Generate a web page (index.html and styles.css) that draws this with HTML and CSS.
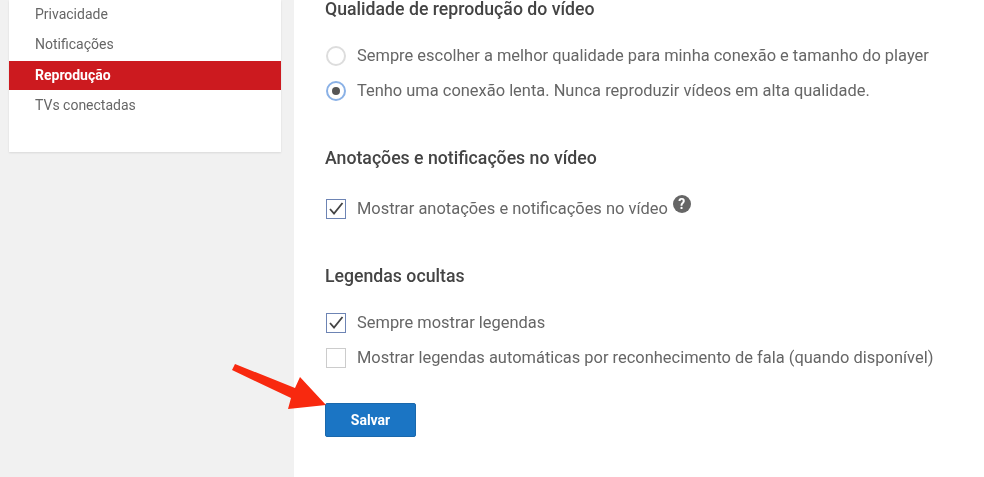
FILE: index.html
```html
<!DOCTYPE html>
<html lang="pt">
<head>
    <meta charset="UTF-8">
    <title>Reprodução</title>
    <link rel="stylesheet" href="styles.css">
</head>
<body>
    <div class="page">
        <div class="side">
            <div class="menu">
                <a href="#">Privacidade</a>
                <a href="#">Notificações</a>
                <a href="#" class="active">Reprodução</a>
                <a href="#">TVs conectadas</a>
            </div>
        </div>
        <div class="main">
            <h2 class="first">Qualidade de reprodução do vídeo</h2>
            <div class="options">
                <div class="option">
                    <span class="radio"></span>
                    <span>Sempre escolher a melhor qualidade para minha conexão e tamanho do player</span>
                </div>
                <div class="option">
                    <span class="radio on"></span>
                    <span>Tenho uma conexão lenta. Nunca reproduzir vídeos em alta qualidade.</span>
                </div>
            </div>
            <h2>Anotações e notificações no vídeo</h2>
            <div class="options tall">
                <div class="option">
                    <span class="check on">
                        <svg width="18" height="18" viewBox="0 0 18 18"><path d="M3 9l4 4.5L15.5 3" fill="none" stroke="#444" stroke-width="1.8"/></svg>
                    </span>
                    <span>Mostrar anotações e notificações no vídeo</span>
                    <span class="help">?</span>
                </div>
            </div>
            <h2>Legendas ocultas</h2>
            <div class="options">
                <div class="option">
                    <span class="check on">
                        <svg width="18" height="18" viewBox="0 0 18 18"><path d="M3 9l4 4.5L15.5 3" fill="none" stroke="#444" stroke-width="1.8"/></svg>
                    </span>
                    <span>Sempre mostrar legendas</span>
                </div>
                <div class="option">
                    <span class="check"></span>
                    <span>Mostrar legendas automáticas por reconhecimento de fala (quando disponível)</span>
                </div>
            </div>
            <button class="save">Salvar</button>
        </div>
    </div>
    <!-- red arrow drawn over the screenshot -->
    <svg class="arrow" width="984" height="477" viewBox="0 0 984 477">
        <polygon points="235,364 295,388 300,377 326,405 288,409 291,398 232,370" fill="#f8290f"/>
    </svg>
</body>
</html>
```

FILE: styles.css
```css
html, body {
    margin: 0;
    height: 100%;
    overflow: hidden;
}
body {
    background: #fff;
    color: #555;
    font-family: Roboto, Arial, sans-serif;
    position: relative;
}
.page {
    display: flex;
    height: 477px;
    filter: blur(0.4px);
}
.side {
    width: 294px;
    flex: none;
    box-sizing: border-box;
    background: #f1f1f1;
    padding-right: 13px;
    padding-left: 9px;
}
.menu {
    background: #fff;
    height: 152px;
    box-sizing: border-box;
    padding-top: 1px;
    box-shadow: 0 1px 2px rgba(0, 0, 0, 0.1);
}
.menu a {
    display: block;
    height: 30px;
    line-height: 27px;
    padding-left: 26px;
    font-size: 14px;
    color: #666;
    text-decoration: none;
}
.menu a.active {
    height: 29px;
    line-height: 28px;
    margin-bottom: 2px;
    background: #cc1a1f;
    color: #fff;
    font-weight: bold;
}
.main {
    padding-left: 31px;
}
h2 {
    font-size: 17.7px;
    font-weight: 500;
    color: #444;
    margin: 0;
    line-height: 20px;
    padding-top: 40px;
}
h2.first {
    padding-top: 0;
    margin-top: -1px;
}
.options {
    padding-top: 19px;
}
.options.tall {
    padding-top: 23px;
}
.option {
    display: flex;
    align-items: center;
    height: 35px;
    font-size: 16.45px;
    color: #666;
    gap: 11px;
}
.radio {
    width: 16px;
    height: 16px;
    border: 2px solid #ddd;
    border-radius: 50%;
    position: relative;
    flex: none;
    margin-left: 1px;
}
.radio.on {
    border-color: #8ab1e6;
}
.radio.on::after {
    content: "";
    position: absolute;
    left: 4px;
    top: 4px;
    width: 8px;
    height: 8px;
    border-radius: 50%;
    background: #555;
}
.check {
    width: 18px;
    height: 18px;
    border: 1px solid #ccc;
    background: #fff;
    flex: none;
    display: block;
    margin-left: 1px;
}
.check.on {
    border-color: #6d84b4;
}
.check svg {
    display: block;
}
.help {
    width: 18px;
    height: 18px;
    border-radius: 50%;
    background: #666;
    color: #fff;
    font-size: 14px;
    font-weight: bold;
    line-height: 18px;
    text-align: center;
    margin-left: -6px;
    margin-top: -10px;
}
.save {
    display: block;
    width: 91px;
    height: 34px;
    margin-top: 28px;
    background: #1b75c4;
    border: 1px solid #1a68ac;
    border-radius: 2px;
    color: #fff;
    font-family: Roboto, Arial, sans-serif;
    font-size: 14px;
    font-weight: bold;
    padding: 0;
}
.arrow {
    position: absolute;
    left: 0;
    top: 0;
}
```
